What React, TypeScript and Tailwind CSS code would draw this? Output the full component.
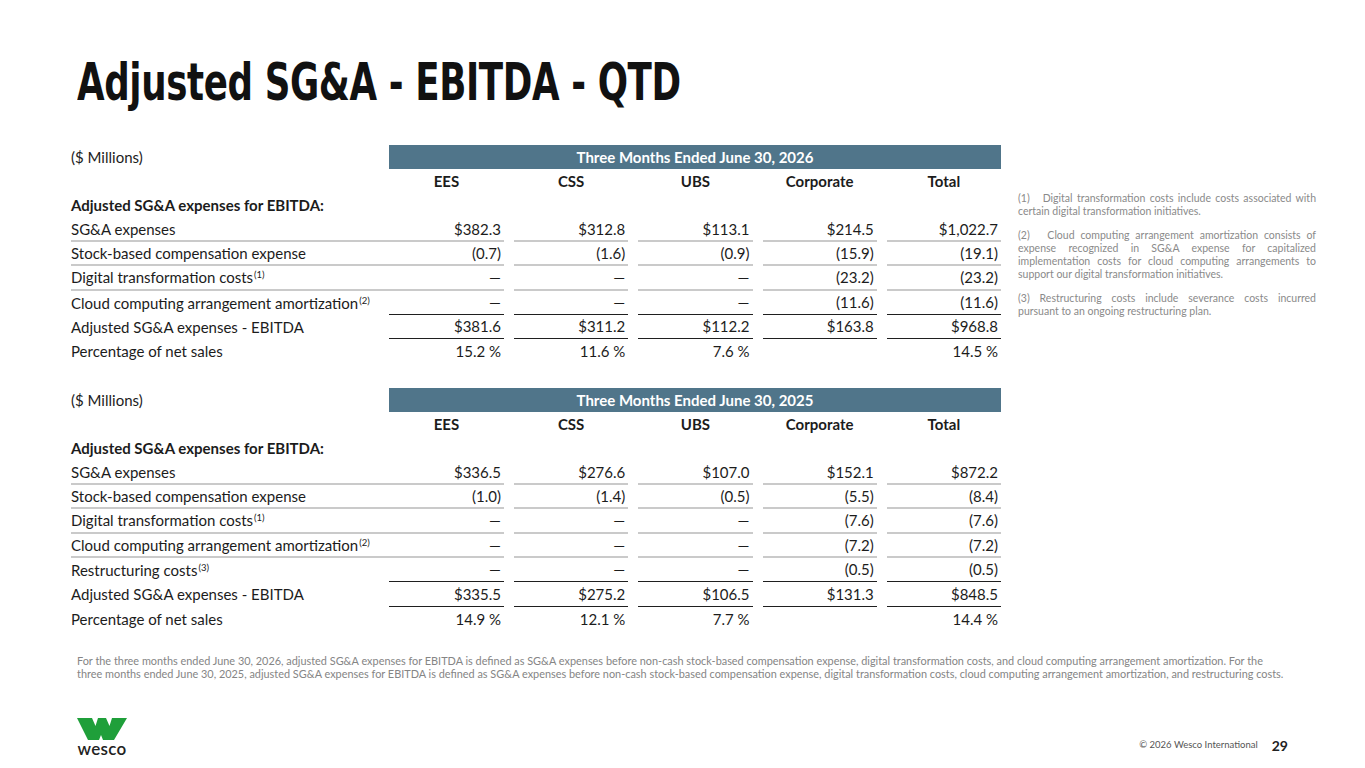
import React from "react";

type RowT = { label: string; sup?: string; vals: string[]; line: "gray" | "black" | "none" };

const t1: RowT[] = [
  { label: "SG&A expenses", vals: ["$382.3", "$312.8", "$113.1", "$214.5", "$1,022.7"], line: "gray" },
  { label: "Stock-based compensation expense", vals: ["(0.7)", "(1.6)", "(0.9)", "(15.9)", "(19.1)"], line: "gray" },
  { label: "Digital transformation costs", sup: "(1)", vals: ["—", "—", "—", "(23.2)", "(23.2)"], line: "gray" },
  { label: "Cloud computing arrangement amortization", sup: "(2)", vals: ["—", "—", "—", "(11.6)", "(11.6)"], line: "black" },
  { label: "Adjusted SG&A expenses - EBITDA", vals: ["$381.6", "$311.2", "$112.2", "$163.8", "$968.8"], line: "black" },
  { label: "Percentage of net sales", vals: ["15.2 %", "11.6 %", "7.6 %", "", "14.5 %"], line: "none" },
];

const t2: RowT[] = [
  { label: "SG&A expenses", vals: ["$336.5", "$276.6", "$107.0", "$152.1", "$872.2"], line: "gray" },
  { label: "Stock-based compensation expense", vals: ["(1.0)", "(1.4)", "(0.5)", "(5.5)", "(8.4)"], line: "gray" },
  { label: "Digital transformation costs", sup: "(1)", vals: ["—", "—", "—", "(7.6)", "(7.6)"], line: "gray" },
  { label: "Cloud computing arrangement amortization", sup: "(2)", vals: ["—", "—", "—", "(7.2)", "(7.2)"], line: "gray" },
  { label: "Restructuring costs", sup: "(3)", vals: ["—", "—", "—", "(0.5)", "(0.5)"], line: "black" },
  { label: "Adjusted SG&A expenses - EBITDA", vals: ["$335.5", "$275.2", "$106.5", "$131.3", "$848.5"], line: "black" },
  { label: "Percentage of net sales", vals: ["14.9 %", "12.1 %", "7.7 %", "", "14.4 %"], line: "none" },
];

const cols = ["EES", "CSS", "UBS", "Corporate", "Total"];

function DataRow({ r }: { r: RowT }) {
  const lbl = r.line === "gray" ? "border-b-2 border-[#cacaca]" : "";
  const cell =
    r.line === "gray"
      ? "border-b-2 border-[#cacaca]"
      : r.line === "black"
      ? "border-b-[1.5px] border-[#1f1f1f]"
      : "";
  return (
    <div className="flex h-[24.3px]">
      <div className={`w-[318px] flex items-center ${lbl}`}>
        <span className="whitespace-nowrap">
          {r.label}
          {r.sup && <sup className="text-[9.5px] ml-[1px] relative top-[-5px]">{r.sup}</sup>}
        </span>
      </div>
      <div className={`w-[115px] flex items-center justify-end pr-[3px] ${cell}`}>{r.vals[0]}</div>
      {r.vals.slice(1).map((v, i) => (
        <div key={i} className={`flex-1 ml-[10px] flex items-center justify-end pr-[3px] ${cell}`}>
          {v}
        </div>
      ))}
    </div>
  );
}

function Table({ year, rows }: { year: string; rows: RowT[] }) {
  return (
    <div>
      <div className="flex h-[24.3px]">
        <div className="w-[318px] flex items-center">($ Millions)</div>
        <div className="flex-1 bg-[#50758a] text-white font-bold flex items-center justify-center">
          Three Months Ended June 30, {year}
        </div>
      </div>
      <div className="flex h-[24.3px] font-bold">
        <div className="w-[318px]" />
        <div className="w-[115px] flex items-center justify-center">{cols[0]}</div>
        {cols.slice(1).map((c) => (
          <div key={c} className="flex-1 ml-[10px] flex items-center justify-center">
            {c}
          </div>
        ))}
      </div>
      <div className="flex h-[24.3px] items-center font-bold">Adjusted SG&amp;A expenses for EBITDA:</div>
      {rows.map((r, i) => (
        <DataRow key={i} r={r} />
      ))}
    </div>
  );
}

export default function App() {
  return (
    <div className="w-[1365px] h-[768px] bg-white relative overflow-hidden text-[#1c1c1c] font-['Lato','Open_Sans',sans-serif]">
      <div className="pl-[77px] pt-[56px] h-[108px]">
        <h1 className="text-[52px] leading-[52px] font-bold text-[#111] font-['DejaVu_Sans_Condensed','DejaVu_Sans',sans-serif] tracking-[-0.5px] whitespace-nowrap origin-left scale-x-[0.762]">
          Adjusted SG&amp;A - EBITDA - QTD
        </h1>
      </div>
      <div className="flex pl-[71px] mt-[37px] text-[15px]">
        <div className="w-[930px]">
          <Table year="2026" rows={t1} />
          <div className="h-[24.3px]" />
          <Table year="2025" rows={t2} />
        </div>
        <div className="ml-[17px] w-[298px] pt-[47px] text-[10.5px] leading-[13.3px] text-[#8a8a8a] text-justify">
          <p className="mb-[10px]">(1)&nbsp;&nbsp; Digital transformation costs include costs associated with certain digital transformation initiatives.</p>
          <p className="mb-[10px]">(2)&nbsp;&nbsp; Cloud computing arrangement amortization consists of expense recognized in SG&amp;A expense for capitalized implementation costs for cloud computing arrangements to support our digital transformation initiatives.</p>
          <p>(3) Restructuring costs include severance costs incurred pursuant to an ongoing restructuring plan.</p>
        </div>
      </div>
      <p className="pl-[77px] mt-[23px] text-[10.9px] leading-[13.3px] text-[#858585] whitespace-nowrap">
        For the three months ended June 30, 2026, adjusted SG&amp;A expenses for EBITDA is defined as SG&amp;A expenses before non-cash stock-based compensation expense, digital transformation costs, and cloud computing arrangement amortization. For the
        <br />
        three months ended June 30, 2025, adjusted SG&amp;A expenses for EBITDA is defined as SG&amp;A expenses before non-cash stock-based compensation expense, digital transformation costs, cloud computing arrangement amortization, and restructuring costs.
      </p>
      <div className="flex items-end justify-between pl-[77px] pr-[77px] mt-[37px]">
        <div className="flex flex-col items-center w-[50px]">
          <svg width="50" height="22" viewBox="0 0 50 22">
            <polygon points="0,0 15,0 18.5,8 21,0 29,0 32.5,8 35,0 50,0 37,22 26,22 24,17 22,22 11,22" fill="#1f9f3a" />
          </svg>
          <span className="mt-[1px] text-[17px] leading-[16px] font-semibold text-[#222] font-['Lato',sans-serif] tracking-[0.3px]">wesco</span>
        </div>
        <div className="flex items-center gap-[14px] pb-[1px]">
          <span className="text-[9.5px] text-[#555]">© 2026 Wesco International</span>
          <span className="text-[14px] font-bold text-[#222]">29</span>
        </div>
      </div>
    </div>
  );
}
